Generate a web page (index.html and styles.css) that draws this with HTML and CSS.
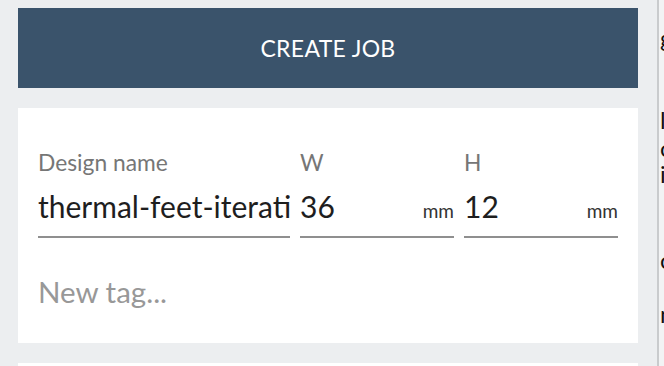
FILE: index.html
```html
<!DOCTYPE html>
<html>
<head>
<meta charset="utf-8">
<link rel="stylesheet" href="styles.css">
</head>
<body>
<div class="layout">
  <div class="main">
    <button class="create-btn">CREATE JOB</button>
    <div class="card">
      <div class="fields">
        <div class="field field-name">
          <label class="label">Design name</label>
          <div class="input-row">
            <span class="value">thermal-feet-iteration-3</span>
          </div>
        </div>
        <div class="field field-dim">
          <label class="label">W</label>
          <div class="input-row">
            <span class="value">36</span>
            <span class="unit">mm</span>
          </div>
        </div>
        <div class="field field-dim">
          <label class="label">H</label>
          <div class="input-row">
            <span class="value">12</span>
            <span class="unit">mm</span>
          </div>
        </div>
      </div>
      <div class="tag-input">New tag...</div>
    </div>
    <div class="card card-next"></div>
  </div>
  <div class="divider"></div>
  <div class="side">
    <div class="side-line l1">g</div>
    <div class="side-line l2">l</div>
    <div class="side-line l3">o</div>
    <div class="side-line l4">if</div>
    <div class="side-line l5">o</div>
    <div class="side-line l6">n</div>
  </div>
</div>
</body>
</html>
```
FILE: styles.css
```css
* { box-sizing: border-box; }
html, body { margin: 0; padding: 0; }
body {
  background: #eceef0;
  font-family: Lato, "Liberation Sans", sans-serif;
  width: 664px;
  height: 366px;
  overflow: hidden;
}
.layout {
  display: flex;
  height: 366px;
  overflow: hidden;
}
.main {
  width: 657px;
  flex: none;
  padding: 8px 19px 0 18px;
}
.create-btn {
  display: flex;
  align-items: center;
  justify-content: center;
  width: 100%;
  height: 80px;
  border: 0;
  margin: 0;
  padding: 0;
  background: #3a536b;
  color: #ffffff;
  font-family: Lato, "Liberation Sans", sans-serif;
  font-size: 23px;
  letter-spacing: 0.3px;
}
.card {
  background: #ffffff;
  margin-top: 20px;
  height: 235px;
  padding: 40px 20px 0 20px;
}
.card-next {
  height: 40px;
  padding: 0;
}
.fields {
  display: flex;
  gap: 10px;
}
.field { display: flex; flex-direction: column; }
.field-name { width: 252px; }
.field-dim { width: 154px; }
.label {
  font-size: 22.8px;
  line-height: 28px;
  color: #767676;
}
.input-row {
  display: flex;
  align-items: baseline;
  border-bottom: 2px solid #8f8f8f;
  height: 62px;
  padding-top: 12px;
  overflow: hidden;
}
.value {
  flex: 1;
  font-size: 30px;
  line-height: 36px;
  color: #1e1e1e;
  white-space: nowrap;
  overflow: hidden;
}
.unit {
  font-size: 19px;
  color: #333;
}
.tag-input {
  margin-top: 36px;
  font-size: 29.5px;
  line-height: 36px;
  color: #989898;
}
.divider {
  width: 2px;
  flex: none;
  background: #c9cbcd;
}
.side {
  flex: 1;
  background: #f2f3f4;
  overflow: hidden;
  padding-left: 1px;
  color: #111;
  font-size: 24px;
  line-height: 24px;
}
.side-line { white-space: nowrap; }
.l1 { margin-top: 26px; }
.l2 { margin-top: 58px; }
.l3 { margin-top: 4px; }
.l4 { margin-top: 2px; }
.l5 { margin-top: 62px; }
.l6 { margin-top: 30px; }
```
